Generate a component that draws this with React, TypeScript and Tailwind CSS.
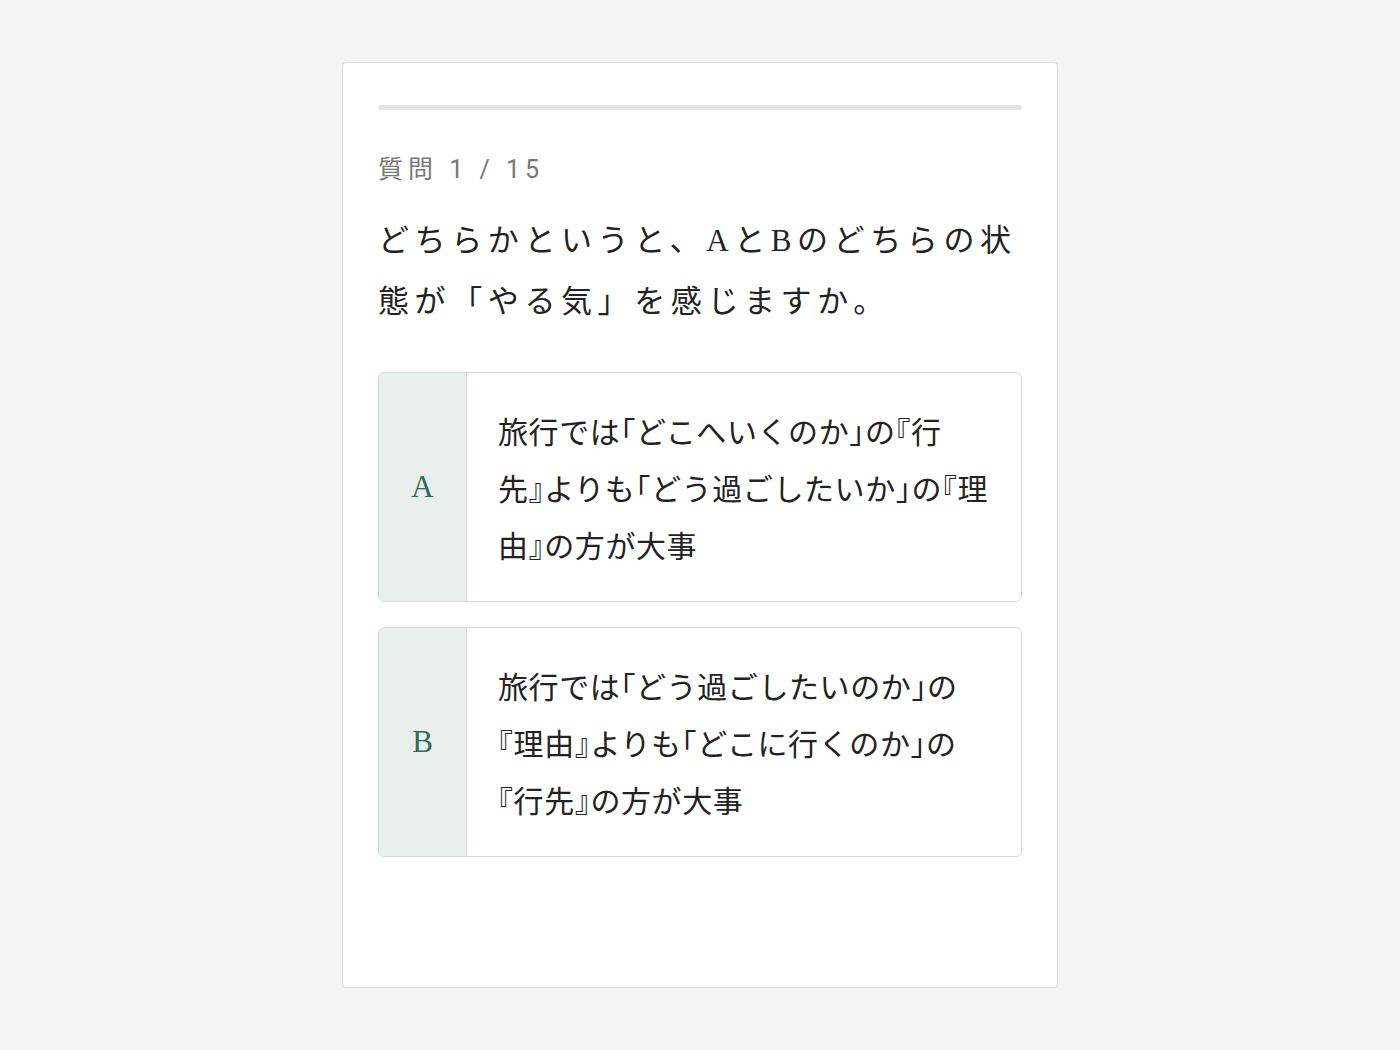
const options = [
  {
    key: "A",
    lines: ["旅行では「どこへいくのか」の『行", "先』よりも「どう過ごしたいか」の『理", "由』の方が大事"],
  },
  {
    key: "B",
    lines: ["旅行では「どう過ごしたいのか」の", "『理由』よりも「どこに行くのか」の", "『行先』の方が大事"],
  },
];

const App = () => {
  return (
    <div className="min-h-screen w-full bg-[#f3f5f4] flex justify-center pt-[62px]">
      <div className="w-[716px] h-[926px] bg-white border border-[#d9dcdb] rounded-[4px] px-[35px] pt-[42px]">
        {/* progress */}
        <div className="h-[5px] w-full rounded-full bg-[#e3e4e4]" />

        <p className="mt-[44px] text-[25px] leading-[32px] tracking-[0.2em] text-[#777] font-['Roboto','Noto_Sans_CJK_JP',sans-serif]">
          質問 1 / 15
        </p>

        <h2 className="mt-[24px] text-[31px] leading-[61px] tracking-[5.6px] text-[#222] whitespace-nowrap font-['Liberation_Serif','Noto_Sans_CJK_JP',serif]">
          <span className="block">どちらかというと、AとBのどちらの状</span>
          <span className="block">態が「やる気」を感じますか。</span>
        </h2>

        <div className="mt-[40px] flex flex-col gap-[25px]">
          {options.map((o) => (
            <button
              key={o.key}
              className="flex h-[230px] w-full overflow-hidden rounded-[6px] border border-[#d6d9d8] bg-white text-left"
            >
              <div className="w-[88px] shrink-0 flex items-center justify-center bg-[#e9efed] border-r border-[#d6d9d8]">
                <span className="text-[31px] text-[#2f6b5b] font-['Liberation_Serif',serif]">{o.key}</span>
              </div>
              <div className="flex flex-col justify-center pl-[31px] pr-[12px] text-[30px] leading-[57px] tracking-[0.6px] text-[#222] whitespace-nowrap [font-feature-settings:'halt'] font-['Noto_Sans_CJK_JP',sans-serif]">
                {o.lines.map((l) => (
                  <span key={l} className="block">
                    {l}
                  </span>
                ))}
              </div>
            </button>
          ))}
        </div>
      </div>
    </div>
  );
};

export default App;
